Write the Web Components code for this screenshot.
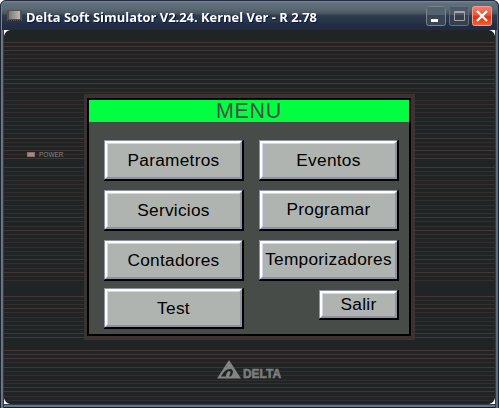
<!DOCTYPE html>
<html lang="es"><head><meta charset="utf-8"><title>Delta Soft Simulator</title>
<style>html,body{margin:0;background:#fff;overflow:hidden}</style></head><body>
<sim-window>
 <window-bar slot="bar">Delta Soft Simulator V2.24. Kernel Ver - R 2.78</window-bar>
 <power-light>POWER</power-light>
 <hmi-screen>
  <span slot="title">MENU</span>
  <hmi-button>Parametros</hmi-button>
  <hmi-button>Eventos</hmi-button>
  <hmi-button>Servicios</hmi-button>
  <hmi-button style="--lift:2px">Programar</hmi-button>
  <hmi-button>Contadores</hmi-button>
  <hmi-button style="--lift:2px">Temporizadores</hmi-button>
  <hmi-button class="last">Test</hmi-button>
  <hmi-button class="small">Salir</hmi-button>
 </hmi-screen>
 <delta-logo></delta-logo>
</sim-window>
<script>
function define(name, html, setup){
  customElements.define(name, class extends HTMLElement{
    constructor(){super();this.attachShadow({mode:'open'}).innerHTML=html;if(setup)setup(this.shadowRoot);}
  });
}
define('sim-window',`<style>
:host{display:block;box-sizing:border-box;width:499px;height:408px;background:linear-gradient(90deg,#1b2333 0 1px,#6b7888 1px 2px,#66727f 2px 3px,#2c3a54 3px 4px,transparent 4px 495px,#2c3a54 495px 496px,#5e6b7c 496px 498px,#1b2333 498px),linear-gradient(#222c40 0 404px,#2c3c54 404px 405px,#647484 405px 407px,#151c29 407px);border-radius:6px 6px 0 0;overflow:hidden}
main{position:relative;margin:0 4px;height:374px;background:#202424;display:flex;flex-direction:column;align-items:center;overflow:hidden}
.lines{position:absolute;inset:0;width:491px;height:374px}
.grid{position:relative;display:grid;grid-template-columns:80px 331px 80px;grid-template-rows:64px 246px 64px;width:491px}
::slotted(power-light){grid-area:2/1;margin:56px 0 0 23px}
::slotted(hmi-screen){grid-area:2/2}
::slotted(delta-logo){grid-area:3/2}
.corners{position:absolute;inset:0;width:491px;height:374px}
</style><slot name="bar"></slot><main><svg class="lines" shape-rendering="crispEdges"></svg><div class="grid"><slot></slot></div>
<svg class="corners" fill="#fff"><path d="M0 0H6Q1 1 0 6ZM491 0V6Q490 1 485 0ZM0 374V368Q1 373 6 374ZM491 374H485Q490 373 491 368Z"/></svg></main>`,r=>{
  const ys=[42,46,50,54,58,62,66,70,75,79,83,88,92,100,104,108,112,117,121,125,129,133,138,142,146,150,154,158,167,171,175,180,184,188,192,196,200,205,209,213,217,221,226,230,234,238,242,247,251,255,259,263,268,272,276,280,296,300,304,308,312,317,321,325,329,333,337,350,354,358,362,367,371,375,380,383,387,391,396,400];
  const bright=new Set([42,46,50,79,83,138,150,158,167,217,230,259,272,296,308,333,337,350,354,358,367,387,391]);
  r.querySelector('.lines').innerHTML=ys.map(y=>`<rect y="${y-30}" width="491" height="1" fill="${bright.has(y)?'#423636':'#322f2e'}"/>`).join('');
});
define('window-bar',`<style>
:host{display:flex;box-sizing:border-box;height:30px;padding:0 6px 0 6px;align-items:flex-start;border:1px solid #242d40;border-bottom:0;border-radius:6px 6px 0 0;color:#fff;background:linear-gradient(#7c8995 0,#626f7c 2px,#5a6874 8px,#46535f 13px,#303d4d 14px,#29364b 19px,#222c43 24px,#202a40 29px);box-shadow:inset 1px 0 #788490,inset -1px 0 #59677a}
.name{flex:1;height:29px;margin-left:3px}
text{font:bold 13px "Open Sans","Noto Sans",sans-serif;fill:#fff;filter:drop-shadow(1px 1px 0 #0a1642)}
.ctl{display:flex;gap:3px;margin-top:5px}
</style><svg width="16" height="13" viewBox="0 0 16 13" style="margin-top:9px" shape-rendering="crispEdges"><defs><linearGradient id="g"><stop stop-color="#777"/><stop offset="1" stop-color="#bbb"/></linearGradient></defs><path fill="#555149" d="M0 0h15v11H0z"/><path fill="url(#g)" d="M2 1h11v8H2z"/><path stroke="#25282b" stroke-dasharray="1 1" d="M1 10.5h13"/></svg>
<svg class="name"><text x="0" y="20.5" textLength="291" lengthAdjust="spacingAndGlyphs" class="main"></text></svg>
<div class="ctl"><svg width="20" height="20"><rect x=".5" y=".5" width="19" height="19" rx="2" fill="#3b4654" stroke="#7b838e"/><path fill="#536170" d="M1 1h18v8H1z"/><path fill="#fff" d="M5 13h7v3H5z"/></svg>
<svg width="20" height="20"><rect x=".5" y=".5" width="19" height="19" rx="2" fill="#354050" stroke="#66707c"/><path fill="#4b5968" d="M1 1h18v8H1z"/><path fill="none" stroke="#a5a5a5" d="M5.5 5.5h10v9h-10zM5 6.5h11"/></svg>
<svg width="20" height="20"><defs><linearGradient id="r" x2="0" y2="1"><stop stop-color="#f38070"/><stop offset=".45" stop-color="#ef5238"/><stop offset=".55" stop-color="#e52d10"/><stop offset="1" stop-color="#f06434"/></linearGradient></defs><rect x=".5" y=".5" width="19" height="19" rx="2" fill="url(#r)" stroke="#eda096"/><path d="M5 5l10 10M15 5L5 15" stroke="#fff" stroke-width="2.4"/></svg></div><slot hidden></slot>`);
const bar=document.querySelector('window-bar');
bar.shadowRoot.querySelector('.main').textContent=bar.textContent;
define('power-light',`<style>:host{display:flex;align-items:center;gap:4px;height:8px;font:6.5px "Liberation Sans",Arial,sans-serif;color:#858985;align-self:start}
i{width:8px;height:5px;background:#a98788;border:1px solid #866f70;box-sizing:border-box}span{background:#202424}</style><i></i><span><slot></slot></span>`);
define('hmi-screen',`<style>
:host{display:block;box-sizing:border-box;height:246px;background:#3b3232;padding:4px 4px 4px 3px}
section{box-sizing:border-box;height:238px;border:2px solid #000;background:#484c48}
header{height:22px;line-height:22px;background:#00ff40;color:#48504a;text-align:center;font-family:"Liberation Sans",Arial,sans-serif;font-size:21.5px;letter-spacing:.7px}
.keys{display:grid;grid-template-columns:140px 140px;column-gap:15px;grid-template-rows:50px 50px 48px 41px;padding:18px 0 0 15px}
::slotted(.small){width:80px;height:30px!important;justify-self:end;margin-top:2px}
</style><section><header><slot name="title"></slot></header><div class="keys"><slot></slot></div></section>`);
define('hmi-button',`<style>
:host{display:block;box-sizing:border-box;height:41px;width:140px;background:#000;padding:0 1px 1px 0;font:17.3px "Liberation Sans",Arial,sans-serif;letter-spacing:.27px;color:#000}
.o{box-sizing:border-box;height:100%;border:1px solid;border-color:#9092a4 #000 #000 #9092a4}
.a{box-sizing:border-box;height:100%;border:2px solid;border-color:#fff #9091a2 #9091a2 #fff}
.b{box-sizing:border-box;height:100%;border:1px solid;border-color:#d5d5f2 #b0b4b0 #b0b4b0 #d5d5f2;background:#b0b4b0;display:flex;justify-content:center;align-items:center;white-space:nowrap}
span{padding-bottom:var(--lift,0)}
</style><div class="o"><div class="a"><div class="b"><span><slot></slot></span></div></div></div>`);
define('delta-logo',`<style>:host{display:block;justify-self:start;margin:19px 0 0 133px;width:65px;height:21px}</style>
<svg width="65" height="21"><g fill="#838484"><path d="M12 1 24 19.5H0Z"/><path fill="#202424" d="M4 17.5Q8 9 14 10Q18 12 14 17.5H12Q15 12 12 12Q9 13 9 17.5Z"/></g>
<text x="26" y="19" textLength="38" lengthAdjust="spacingAndGlyphs" font-family="Liberation Sans,Arial,sans-serif" font-weight="bold" font-size="12.5" fill="#7b7d7d" stroke="#7b7d7d" stroke-width=".6">DELTA</text></svg>`);
</script></body></html>
